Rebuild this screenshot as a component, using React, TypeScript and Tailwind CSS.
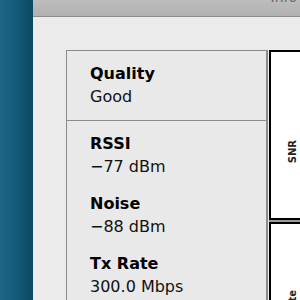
import React from 'react';

type Stat = { label: string; value: string };

// Signal readings shown in the lower half of the panel
const stats: Stat[] = [
  { label: 'RSSI', value: '\u221277 dBm' },
  { label: 'Noise', value: '\u221288 dBm' },
  { label: 'Tx Rate', value: '300.0 Mbps' },
];

const font = { fontFamily: '"DejaVu Sans", "Lucida Grande", sans-serif' };

function StatBlock({ label, value }: Stat) {
  return (
    <div className="flex flex-col">
      <span className="text-[16px] leading-[22px] font-bold text-black">{label}</span>
      <span className="text-[16px] leading-[23px] text-[#111]">{value}</span>
    </div>
  );
}

export default function App() {
  return (
    <div className="w-[300px] h-[300px] flex overflow-hidden" style={font}>
      {/* Desktop backdrop */}
      <div className="w-[33px] shrink-0 bg-gradient-to-r from-[#1a6684] via-[#135a78] to-[#0c4862]" />

      {/* Window */}
      <div className="flex-1 flex flex-col bg-[#ebebeb] min-w-0">
        {/* Title bar */}
        <div className="h-[17px] shrink-0 bg-gradient-to-b from-[#bdbdbd] to-[#b1b1b1] border-b border-[#8e8e8e] flex justify-end overflow-hidden">
          <span className="text-[14px] leading-[14px] -mt-[10px] pr-[3px] text-[#6a6a6a] whitespace-nowrap">Info</span>
        </div>

        {/* Body */}
        <div className="flex-1 flex pl-[33px] pt-[33px] min-h-0">
          {/* Left stats panel */}
          <div className="w-[202px] shrink-0 flex flex-col border-l border-t border-r-2 border-[#8c8c8c] bg-[#e9e9e9]">
            <div className="h-[70px] pl-[23px] pt-[12px] border-b border-[#8c8c8c]">
              <StatBlock label="Quality" value="Good" />
            </div>
            <div className="flex flex-col gap-[15px] pl-[23px] pt-[12px]">
              {stats.map((s) => (
                <StatBlock key={s.label} label={s.label} value={s.value} />
              ))}
            </div>
          </div>

          {/* Right graph panels */}
          <div className="flex-1 flex flex-col ml-px bg-[#9a9a9a] gap-[2px]">
            <div className="h-[170px] shrink-0 bg-white border-l-2 border-t-2 border-b-2 border-black pl-[16px] pt-[88px]">
              <span className="block text-[10px] leading-[12px] font-bold text-[#222] rotate-180 [writing-mode:vertical-rl] whitespace-nowrap">SNR</span>
            </div>
            <div className="flex-1 bg-white border-l-2 border-t-2 border-black pl-[16px] pt-[66px]">
              <span className="block text-[10px] leading-[12px] font-bold text-[#222] rotate-180 [writing-mode:vertical-rl] whitespace-nowrap">Tx Rate</span>
            </div>
          </div>
        </div>
      </div>
    </div>
  );
}
